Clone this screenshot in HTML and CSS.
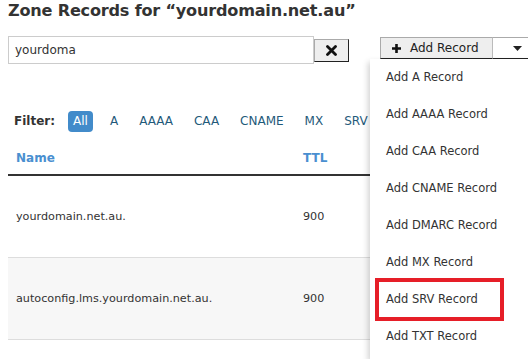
FILE: index.html
```html
<!DOCTYPE html>
<html>
<head>
<meta charset="utf-8">
<link rel="stylesheet" href="styles.css">
</head>
<body>
<div class="page">
  <h1 class="title">Zone Records for “yourdomain.net.au”</h1>
  <div class="toolbar">
    <div class="search">
      <input class="search-input" type="text" value="yourdoma">
      <button class="clear-btn" type="button"><svg width="11" height="11" viewBox="0 0 11 11"><path d="M1.5 1.5 L9.5 9.5 M9.5 1.5 L1.5 9.5" stroke="#111" stroke-width="2.8" stroke-linecap="round"/></svg></button>
    </div>
    <div class="split">
      <button class="add-btn" type="button"><svg width="11" height="11" viewBox="0 0 11 11"><path d="M5.5 1 V10 M1 5.5 H10" stroke="#111" stroke-width="2.6"/></svg><span>Add Record</span></button>
      <button class="caret-btn" type="button"><svg width="9" height="5" viewBox="0 0 9 5"><path d="M0 0 H9 L4.5 5 Z" fill="#222"/></svg></button>
      <ul class="menu">
        <li class="menu-item">Add A Record</li>
        <li class="menu-item">Add AAAA Record</li>
        <li class="menu-item">Add CAA Record</li>
        <li class="menu-item">Add CNAME Record</li>
        <li class="menu-item">Add DMARC Record</li>
        <li class="menu-item">Add MX Record</li>
        <li class="menu-item highlighted">Add SRV Record</li>
        <li class="menu-item">Add TXT Record</li>
      </ul>
    </div>
  </div>
  <div class="filter">
    <span class="filter-label">Filter:</span>
    <span class="chip active">All</span>
    <span class="chip">A</span>
    <span class="chip">AAAA</span>
    <span class="chip">CAA</span>
    <span class="chip">CNAME</span>
    <span class="chip">MX</span>
    <span class="chip">SRV</span>
  </div>
  <div class="table">
    <div class="thead">
      <div class="col-name">Name</div>
      <div class="col-ttl">TTL</div>
    </div>
    <div class="row">
      <div class="col-name">yourdomain.net.au.</div>
      <div class="col-ttl">900</div>
    </div>
    <div class="row alt">
      <div class="col-name">autoconfig.lms.yourdomain.net.au.</div>
      <div class="col-ttl">900</div>
    </div>
  </div>
</div>
</body>
</html>
```
FILE: styles.css
```css
* { box-sizing: border-box; }
html, body { margin: 0; padding: 0; background: #fff; overflow: hidden; }
body { width: 528px; height: 359px; font-family: "DejaVu Sans", Verdana, sans-serif; color: #333; }
.page { padding: 0 0 0 8px; width: 540px; }
.title {
  margin: 0;
  padding-top: 1px;
  font-size: 16.1px;
  font-weight: bold;
  color: #333;
  height: 36px;
  line-height: 20px;
  letter-spacing: -0.2px;
}
.toolbar { display: flex; align-items: flex-start; height: 64px; }
.search { display: flex; align-items: flex-start; }
.search-input {
  width: 306px; height: 28px; margin: 0;
  border: 1px solid #ccc; padding: 0 6px;
  font-family: inherit; font-size: 12px; color: #333; outline: none;
}
.clear-btn {
  margin: 3px 0 0 0; width: 35px; height: 23px; padding: 0;
  background: #eee; border: 1px solid #aaa; border-right-color: #222; border-bottom-color: #222;
  display: flex; align-items: center; justify-content: center;
}
.split { position: relative; display: flex; margin: 1px 0 0 31px; }
.add-btn {
  width: 113px; height: 22px; padding: 0 0 0 10px; margin: 0;
  background: #eee; border: 1px solid #aaa; border-right: 1px solid #bbb; border-bottom-color: #222;
  display: flex; align-items: center; gap: 8px;
  font-family: inherit; font-size: 12px; color: #222;
}
.caret-btn {
  width: 40px; height: 22px; padding: 0 0 0 10px; margin: 0;
  background: #fff; border: 1px solid #aaa; border-left: none; border-right-color: #222; border-bottom-color: #222;
  display: flex; align-items: center; justify-content: center;
}
.menu {
  position: absolute; left: -10px; top: 22px;
  width: 160px; margin: 0; padding: 0 0 4px 0; list-style: none;
  background: #fff;
  box-shadow: -2px 3px 6px rgba(0,0,0,0.18);
  z-index: 2;
}
.menu-item {
  position: relative;
  height: 37px; line-height: 37px; padding-left: 16px;
  font-size: 11.5px; color: #333;
}
.menu-item.highlighted::after {
  content: "";
  position: absolute; left: 5px; right: 26px; top: -3px; bottom: -3px;
  border: 4.5px solid #e61e28;
}
.filter { display: flex; align-items: center; height: 42px; padding-left: 6px; gap: 0; }
.filter-label { font-weight: bold; font-size: 12px; color: #333; margin-right: 13px; }
.chip { font-size: 12px; color: #1f5a7a; padding: 3px 5px 4px; margin-right: 11px; border-radius: 4px; }
.chip.active { background: #428bca; color: #fff; margin-right: 12px; }
.table { width: 520px; margin-top: 0; }
.thead { display: flex; height: 34px; align-items: center; border-bottom: 2px solid #333; font-weight: bold; font-size: 12px; color: #4a8fd0; }
.row { display: flex; height: 82px; align-items: center; border-bottom: 1px solid #ddd; font-size: 11.2px; color: #333; }
.row.alt { background: #f7f7f7; }
.col-name { width: 295px; padding-left: 8px; }
.col-ttl { flex: 1; }
```
